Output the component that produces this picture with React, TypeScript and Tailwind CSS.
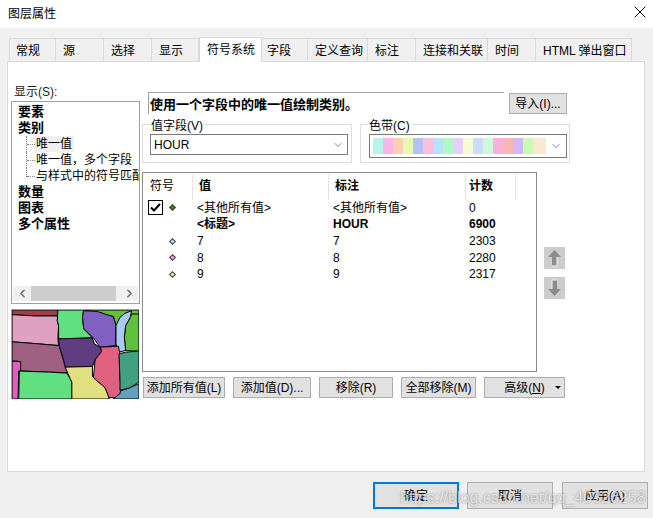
import { ChevronDown, ChevronLeft, ChevronRight, X } from 'lucide-react';

const TABS = [
  { label: '常规', w: 'w-[47px] pl-[6px] border-l' },
  { label: '源', w: 'w-[48px] pl-[7px]' },
  { label: '选择', w: 'w-[48px] pl-[7px]' },
  { label: '显示', w: 'w-[47px] pl-[7px]' },
  { label: '符号系统', w: 'w-[63px] pl-[7px]', active: true },
  { label: '字段', w: 'w-[46px] pl-[5px]' },
  { label: '定义查询', w: 'w-[60px] pl-[7px]' },
  { label: '标注', w: 'w-[48px] pl-[7px]' },
  { label: '连接和关联', w: 'w-[72px] pl-[7px]' },
  { label: '时间', w: 'w-[48px] pl-[7px]' },
  { label: 'HTML 弹出窗口', w: 'w-[96px] pl-[7px]' },
];

const RAMP = [
  '#b8f5e8', '#fbb4e8', '#fccfb4', '#e6f9ae', '#b4c0f8', '#f9c0d8', '#b4e2fa', '#b0f8c4', '#e6d0f8',
  '#f7fbd2', '#ccdcf8', '#d0f9dc', '#fab0d8', '#fcb4b4', '#d2b8f4', '#c8fcb0', '#fbe8d4',
];

const ROWS = [
  { value: '<其他所有值>', label: '<其他所有值>', count: '0', dot: '#2e8b0e', check: true },
  { value: '<标题>', label: 'HOUR', count: '6900', bold: true },
  { value: '7', label: '7', count: '2303', dot: '#b4dcf4' },
  { value: '8', label: '8', count: '2280', dot: '#e8a0e8' },
  { value: '9', label: '9', count: '2317', dot: '#d4f4b0' },
];

// traced from the preview, coordinates are 3x the crop
const MAP_SHAPES = [
  { fill: '#60c040', points: '240,28 402,28 402,60 345,60 333,75 325,48' },
  { fill: '#a04048', points: '20,28 158,28 158,46 90,46 20,42' },
  { fill: '#e0a0c0', points: '20,42 90,46 158,46 156,60 160,75 158,115 160,135 100,130 50,126 20,124' },
  { fill: '#60e080', points: '158,28 240,28 235,35 232,50 236,85 262,112 160,115 160,75 156,60' },
  { fill: '#8060c0', points: '235,30 275,32 325,48 333,75 332,125 333,135 285,140 265,112 236,85 232,50' },
  { fill: '#60c040', points: '402,40 380,40 376,50 362,75 358,110 362,150 398,152 402,152' },
  { fill: '#a8ccf0', points: '345,50 360,38 380,30 376,50 362,75 358,110 362,150 340,155 333,130 333,75' },
  { fill: '#603c80', points: '160,115 262,112 268,130 285,140 290,152 270,178 262,198 180,200 172,170 162,138' },
  { fill: '#a06080', points: '20,124 50,126 100,130 160,135 162,138 172,170 180,200 187,217 130,215 60,212 40,212 40,182 20,182' },
  { fill: '#e060c0', points: '20,182 46,184 46,212 40,212 38,296 20,296' },
  { fill: '#60e080', points: '42,212 130,215 185,218 195,235 200,245 200,296 40,296' },
  { fill: '#e0e080', points: '180,200 262,198 262,228 300,262 310,285 312,296 200,296 200,245 195,235' },
  { fill: '#60a0c0', points: '402,250 402,296 325,296 345,272 375,262' },
  { fill: '#e06080', points: '285,140 340,137 345,160 345,240 350,250 345,280 330,292 312,292 300,262 265,232 270,178 290,152' },
  { fill: '#40a080', points: '342,160 362,155 398,152 402,155 402,245 375,262 345,270 345,240' },
];

const BTN = 'h-[21px] flex items-center justify-center bg-[#e1e1e1] border border-[#adadad] text-[12px] text-black whitespace-nowrap';
const FOOTER_BTN = 'w-[86px] h-[27px] flex items-center justify-center bg-[#e1e1e1] text-[12px] text-black';

function TreeChild({ label, last, selected }: { label: string; last?: boolean; selected?: boolean }) {
  return (
    <div className="h-[16px] flex items-center pl-[14px]">
      <div className={`shrink-0 w-[8px] border-l border-dotted border-[#808080] ${last ? 'h-[9px] self-start' : 'h-[16px]'} relative`}>
        <div className={`absolute left-0 w-[8px] border-t border-dotted border-[#808080] ${last ? 'bottom-0' : 'top-[8px]'}`} />
      </div>
      <span className={`px-[2px] leading-[16px] whitespace-nowrap ${selected ? 'bg-[#f0f0f0]' : ''}`}>{label}</span>
    </div>
  );
}

function ArrowButton({ down }: { down?: boolean }) {
  return (
    <div className="w-[21px] h-[22px] bg-[#cccccc] flex items-center justify-center">
      <svg width="15" height="18" viewBox="0 0 15 18" className={down ? 'rotate-180' : ''}>
        <path d="M7.5 1 L14 8 L10 8 L10 17 L5 17 L5 8 L1 8 Z" fill="#8c8c8c" />
        <path d="M10 8 L10 17 L5 17" fill="none" stroke="#f4f4f4" strokeWidth="1" />
      </svg>
    </div>
  );
}

export default function App() {
  return (
    <div className="relative w-[653px] h-[518px] overflow-hidden bg-[#f0f0f0] text-[12px] text-black font-['Liberation_Sans','Noto_Sans_CJK_SC',sans-serif]">
      <div className="h-[28px] bg-white flex items-center justify-between pl-[8px] pr-[3px]">
        <span className="text-[12px] -mt-[1px]">图层属性</span>
        <X size={20} strokeWidth={1.2} className="text-black -mt-[4px]" />
      </div>

      {/* Tabs */}
      <div className="flex items-end h-[33px] pl-[9px]">
        {TABS.map((tab) => (
          <div
            key={tab.label}
            className={`${tab.w} border-r border-[#d9d9d9] leading-none ${
              tab.active
                ? 'h-[25px] bg-white border-t border-l pt-[6px] -mb-px relative z-10'
                : 'h-[23px] border-t pt-[6px]'
            }`}
          >
            <span className="whitespace-nowrap">{tab.label}</span>
          </div>
        ))}
      </div>

      <div className="ml-[7px] w-[638px] h-[411px] bg-white border border-[#d9d9d9] pl-[3px] pt-[23px] flex">
        {/* Left column */}
        <div className="w-[131px] flex flex-col">
          <span className="ml-[3px] h-[16px] leading-[15px] text-[#1a1a1a]">显示(S):</span>
          <div className="w-[129px] h-[203px] border border-[#a0a0a0] flex flex-col pt-[2px]">
            <div className="flex-1 overflow-hidden leading-[16px]">
              <div className="pl-[6px] h-[16px] font-bold text-[13px]">要素</div>
              <div className="pl-[6px] h-[16px] font-bold text-[13px]">类别</div>
              <TreeChild label="唯一值" selected />
              <TreeChild label="唯一值，多个字段" />
              <TreeChild label="与样式中的符号匹配" last />
              <div className="pl-[6px] h-[16px] font-bold text-[13px]">数量</div>
              <div className="pl-[6px] h-[16px] font-bold text-[13px]">图表</div>
              <div className="pl-[6px] h-[16px] font-bold text-[13px]">多个属性</div>
            </div>
            <div className="ml-px mr-[1px] mb-[2px] h-[15px] bg-[#f0f0f0] flex items-center">
              <div className="w-[18px] flex justify-center">
                <ChevronLeft size={13} strokeWidth={3} className="text-[#707070]" />
              </div>
              <div className="w-[85px] h-[15px] bg-[#cdcdcd]" />
              <div className="flex-1 flex justify-end pr-[2px]">
                <ChevronRight size={13} strokeWidth={3} className="text-[#707070]" />
              </div>
            </div>
          </div>
          <svg
            width="127"
            height="89"
            viewBox="20 28 382 268"
            className="mt-[5px] border-t border-l border-[#a0a0a0] box-content"
          >
            {MAP_SHAPES.map((shape) => (
              <polygon key={shape.points} points={shape.points} fill={shape.fill} stroke="#000" strokeWidth="3" strokeLinejoin="round" />
            ))}
          </svg>
        </div>

        {/* Right column */}
        <div className="flex flex-col w-[430px] mt-[7px]">
          <div className="flex pl-[6px] h-[32px]">
            <div className="w-[356px] h-[22px] border-t border-l border-[#a0a0a0] font-bold text-[13px] leading-[16px] pl-px pt-[4px] whitespace-nowrap">
              使用一个字段中的唯一值绘制类别。
            </div>
            <div className={`${BTN} w-[58px] ml-[5px] mt-px`}>导入(I)...</div>
          </div>

          <div className="flex gap-[8px] h-[39px]">
            <div className="relative w-[210px] border border-[#dcdcdc] pl-[7px] pt-[9px]">
              <span className="absolute left-[7px] -top-[6px] px-[1px] bg-white leading-[14px]">值字段(V)</span>
              <div className="w-[198px] h-[21px] border border-[#7a7a7a] flex items-center justify-between px-[3px]">
                <span>HOUR</span>
                <ChevronDown size={12} strokeWidth={1.3} className="text-[#444]" />
              </div>
            </div>
            <div className="relative w-[210px] border border-[#dcdcdc] pl-[8px] pt-[9px]">
              <span className="absolute left-[7px] -top-[6px] px-[1px] bg-white leading-[14px]">色带(C)</span>
              <div className="w-[198px] h-[24px] border border-[#7a7a7a] flex items-center pl-[3px] pr-[4px]">
                <div className="flex h-[16px] w-[173px]">
                  {RAMP.map((color, i) => (
                    <div key={i} className={i === RAMP.length - 1 ? 'flex-1' : 'w-[10px]'} style={{ backgroundColor: color }} />
                  ))}
                </div>
                <ChevronDown size={12} strokeWidth={1.3} className="text-[#444] ml-auto" />
              </div>
            </div>
          </div>

          <div className="flex mt-[9px]">
            <div className="w-[395px] h-[200px] border border-[#8c8c8c]">
              <div className="grid grid-cols-[50px_136px_137px_50px] h-[25.5px] mt-px font-bold">
                <div className="border-r border-[#e3e3e3] pl-[7px] font-normal leading-[24px]">符号</div>
                <div className="border-r border-[#e3e3e3] pl-[6px] leading-[24px]">值</div>
                <div className="border-r border-[#e3e3e3] pl-[6px] leading-[24px]">标注</div>
                <div className="border-r border-[#e3e3e3] pl-[3px] leading-[24px]">计数</div>
              </div>
              {ROWS.map((row) => (
                <div key={row.count} className={`grid grid-cols-[50px_136px_137px_50px] h-[16.7px] leading-[16px] ${row.bold ? 'font-bold' : ''}`}>
                  <div className="flex items-center relative">
                    {row.check && (
                      <div className="absolute left-[5px] top-0 w-[15px] h-[15px] border border-black flex items-center justify-center">
                        <svg width="11" height="9" viewBox="0 0 11 9">
                          <path d="M1 4.5 L4 7.5 L10 1" fill="none" stroke="#000" strokeWidth="2" />
                        </svg>
                      </div>
                    )}
                    {row.dot && (
                      <div
                        className="ml-[27px] w-[3px] h-[3px] rotate-45 border border-[#444] box-content"
                        style={{ backgroundColor: row.dot }}
                      />
                    )}
                  </div>
                  <div className="pl-[4px] whitespace-nowrap">{row.value}</div>
                  <div className="pl-[4px] whitespace-nowrap">{row.label}</div>
                  <div className="pl-[3px]">{row.count}</div>
                </div>
              ))}
            </div>
            <div className="flex flex-col gap-[8px] ml-[7px] mt-[75px]">
              <ArrowButton />
              <ArrowButton down />
            </div>
          </div>

          <div className="flex gap-[8px] mt-[5px] ml-px">
            <div className={`${BTN} w-[82px]`}>添加所有值(L)</div>
            <div className={`${BTN} w-[78px]`}>添加值(D)...</div>
            <div className={`${BTN} w-[74px]`}>移除(R)</div>
            <div className={`${BTN} w-[75px]`}>全部移除(M)</div>
            <div className={`${BTN} w-[81px] relative`}>
              <span>高级(<span className="underline">N</span>)</span>
              <div className="absolute right-[3px] top-[8px] border-x-[3px] border-x-transparent border-t-[3px] border-t-black" />
            </div>
          </div>
        </div>
      </div>

      {/* Footer buttons */}
      <div className="flex justify-end pr-[5px] mt-[10px]">
        <div className={`${FOOTER_BTN} border-2 border-[#0078d7]`}>确定</div>
        <div className={`${FOOTER_BTN} ml-[8px] border border-[#adadad]`}>取消</div>
        <div className={`${FOOTER_BTN} ml-[9px] border border-[#adadad]`}>应用(A)</div>
      </div>

      {/* Watermark */}
      <div className="absolute left-[400px] top-[488px] text-[16px] leading-[20px] whitespace-nowrap text-white/70 [text-shadow:0_0_2px_rgba(0,0,0,0.45)]">
        https://blog.csdn.net/qq_40326258
      </div>
    </div>
  );
}
